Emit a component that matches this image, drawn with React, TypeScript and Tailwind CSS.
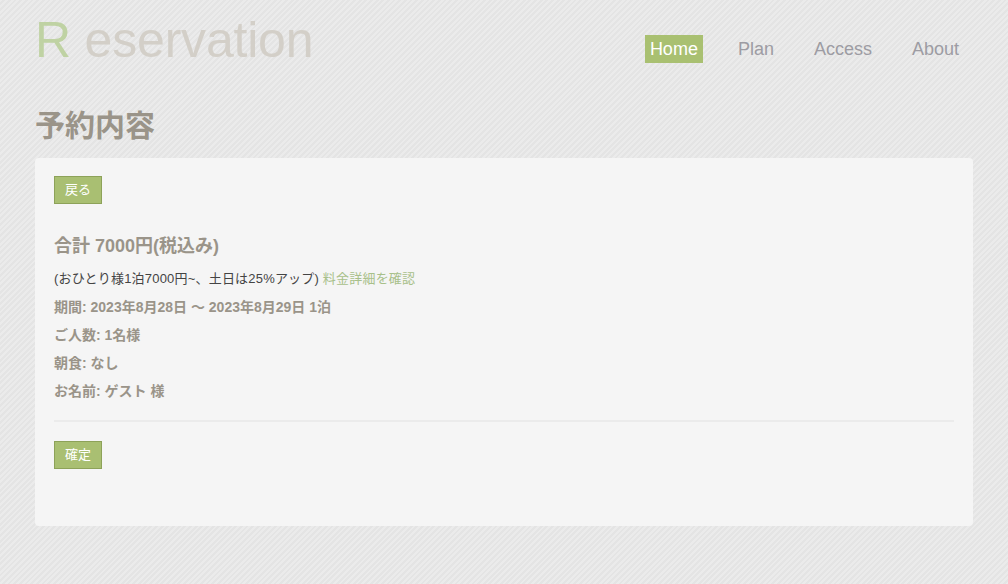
import React from "react";

const font = { fontFamily: '"Liberation Sans", Arial, "Noto Sans CJK JP", sans-serif' };

function Btn({ children }: { children: React.ReactNode }) {
  return (
    <button className="h-[28px] w-[48px] bg-[#a9bf72] border border-[#8da259] text-white text-[13px] leading-[26px] text-center">
      {children}
    </button>
  );
}

export default function App() {
  const info = [
    "期間: 2023年8月28日 〜 2023年8月29日 1泊",
    "ご人数: 1名様",
    "朝食: なし",
    "お名前: ゲスト 様",
  ];
  return (
    <div
      style={font}
      className="min-h-[584px] w-full bg-[repeating-linear-gradient(135deg,#ebebeb_0px,#ebebeb_2px,#e4e4e4_2px,#e4e4e4_4px)]"
    >
      <div className="px-[35px]">
        <header className="flex items-start justify-between">
          <div className="mt-[15px] text-[50px] leading-[50px] tracking-[-0.2px]">
            <span className="text-[#bfd2a3]">R</span>
            <span className="text-[#d3cfc8]"> eservation</span>
          </div>
          <nav className="mt-[35px] mr-[9px] flex gap-[30px] text-[18px]">
            <a className="h-[28px] leading-[28px] px-[5px] bg-[#a9c071] text-white">Home</a>
            <a className="h-[28px] leading-[28px] px-[5px] text-[#9d9ca3]">Plan</a>
            <a className="h-[28px] leading-[28px] px-[5px] text-[#9d9ca3]">Access</a>
            <a className="h-[28px] leading-[28px] px-[5px] text-[#9d9ca3]">About</a>
          </nav>
        </header>

        <h1 className="mt-[46px] text-[30px] leading-[30px] font-bold text-[#9a9489]">予約内容</h1>

        <div className="mt-[17px] w-[938px] rounded-[4px] bg-[#f5f5f5] pt-[18px] pb-[57px] px-[19px]">
          <Btn>戻る</Btn>
          <div className="mt-[30px] text-[18px] leading-[24px] font-bold text-[#9a9489]">合計 7000円(税込み)</div>
          <div className="mt-[11px] text-[13px] leading-[20px] tracking-[0.2px] text-[#444]">
            (おひとり様1泊7000円~、土日は25%アップ) <a className="text-[#a8c08a]">料金詳細を確認</a>
          </div>
          {info.map((t) => (
            <div key={t} className="mt-[8px] text-[14px] leading-[20px] font-bold text-[#9a9489]">
              {t}
            </div>
          ))}
          <div className="mt-[19px] h-[2px] bg-[#ebebeb]" />
          <div className="mt-[19px]">
            <Btn>確定</Btn>
          </div>
        </div>
      </div>
    </div>
  );
}
